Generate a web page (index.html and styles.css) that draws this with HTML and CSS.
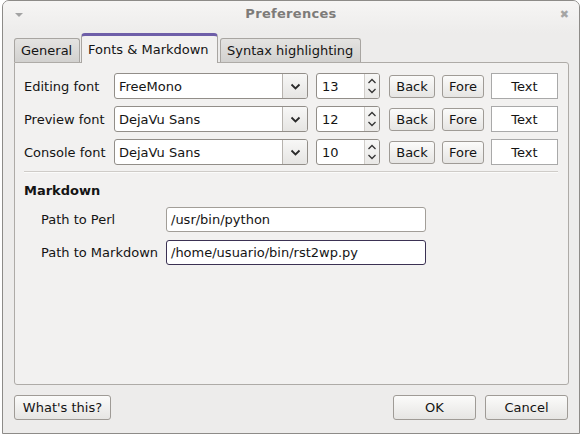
FILE: index.html
```html
<!DOCTYPE html>
<html>
<head>
<meta charset="utf-8">
<link rel="stylesheet" href="styles.css">
</head>
<body>
<div class="window">
  <div class="titlebar">
    <span class="menu-tri"></span>
    <span class="title">Preferences</span>
    <span class="close">&#x2716;</span>
  </div>
  <div class="tabs">
    <div class="tab">General</div>
    <div class="tab active">Fonts &amp; Markdown</div>
    <div class="tab">Syntax highlighting</div>
  </div>
  <div class="panel">
    <div class="fontrow">
      <span class="label">Editing font</span>
      <div class="combo"><span class="combo-text">FreeMono</span><span class="combo-btn"><svg width="11" height="7" viewBox="0 0 11 7"><polyline points="1.5,1.5 5.5,5.5 9.5,1.5" fill="none" stroke="#2a2a2a" stroke-width="1.8"/></svg></span></div>
      <div class="spin"><span class="spin-text">13</span><span class="spin-btns"><svg width="10" height="6" viewBox="0 0 10 6"><polyline points="1.5,5 5,1.5 8.5,5" fill="none" stroke="#333" stroke-width="1.3"/></svg><svg width="10" height="6" viewBox="0 0 10 6"><polyline points="1.5,1 5,4.5 8.5,1" fill="none" stroke="#333" stroke-width="1.3"/></svg></span></div>
      <div class="btn back">Back</div>
      <div class="btn fore">Fore</div>
      <div class="textbox">Text</div>
    </div>
    <div class="fontrow">
      <span class="label">Preview font</span>
      <div class="combo"><span class="combo-text">DejaVu Sans</span><span class="combo-btn"><svg width="11" height="7" viewBox="0 0 11 7"><polyline points="1.5,1.5 5.5,5.5 9.5,1.5" fill="none" stroke="#2a2a2a" stroke-width="1.8"/></svg></span></div>
      <div class="spin"><span class="spin-text">12</span><span class="spin-btns"><svg width="10" height="6" viewBox="0 0 10 6"><polyline points="1.5,5 5,1.5 8.5,5" fill="none" stroke="#333" stroke-width="1.3"/></svg><svg width="10" height="6" viewBox="0 0 10 6"><polyline points="1.5,1 5,4.5 8.5,1" fill="none" stroke="#333" stroke-width="1.3"/></svg></span></div>
      <div class="btn back">Back</div>
      <div class="btn fore">Fore</div>
      <div class="textbox">Text</div>
    </div>
    <div class="fontrow">
      <span class="label">Console font</span>
      <div class="combo"><span class="combo-text">DejaVu Sans</span><span class="combo-btn"><svg width="11" height="7" viewBox="0 0 11 7"><polyline points="1.5,1.5 5.5,5.5 9.5,1.5" fill="none" stroke="#2a2a2a" stroke-width="1.8"/></svg></span></div>
      <div class="spin"><span class="spin-text">10</span><span class="spin-btns"><svg width="10" height="6" viewBox="0 0 10 6"><polyline points="1.5,5 5,1.5 8.5,5" fill="none" stroke="#333" stroke-width="1.3"/></svg><svg width="10" height="6" viewBox="0 0 10 6"><polyline points="1.5,1 5,4.5 8.5,1" fill="none" stroke="#333" stroke-width="1.3"/></svg></span></div>
      <div class="btn back">Back</div>
      <div class="btn fore">Fore</div>
      <div class="textbox">Text</div>
    </div>
    <div class="separator"></div>
    <div class="heading">Markdown</div>
    <div class="pathrow">
      <span class="plabel">Path to Perl</span>
      <div class="input">/usr/bin/python</div>
    </div>
    <div class="pathrow">
      <span class="plabel">Path to Markdown</span>
      <div class="input focused">/home/usuario/bin/rst2wp.py</div>
    </div>
  </div>
  <div class="footer">
    <div class="btn whats">What's this?</div>
    <div class="spacer"></div>
    <div class="btn dlg">OK</div>
    <div class="btn dlg">Cancel</div>
  </div>
</div>
</body>
</html>
```
FILE: styles.css
```css
html, body {
  margin: 0;
  padding: 0;
  background: #ffffff;
  font-family: "DejaVu Sans", sans-serif;
  font-size: 13px;
  color: #141414;
}
.window {
  margin-left: 2px;
  width: 578px;
  height: 434px;
  box-sizing: border-box;
  border: 1px solid #8d8b88;
  border-radius: 7px 7px 0 0;
  background: #edeceb;
  display: flex;
  flex-direction: column;
}
.titlebar {
  height: 32px;
  flex: none;
  display: flex;
  align-items: center;
  position: relative;
  background: linear-gradient(#f6f5f4, #edeceb);
  border-radius: 6px 6px 0 0;
  padding-bottom: 8px;
  box-sizing: border-box;
}
.menu-tri {
  position: absolute;
  left: 12px;
  top: 12px;
  width: 0;
  height: 0;
  border-left: 4px solid transparent;
  border-right: 4px solid transparent;
  border-top: 4px solid #a3a3a3;
}
.title {
  flex: 1;
  text-align: center;
  font-weight: bold;
  color: #7d7b79;
  letter-spacing: 0.3px;
}
.close {
  position: absolute;
  right: 10px;
  top: 7px;
  font-size: 11px;
  color: #a5a5a5;
}
.tabs {
  height: 29px;
  flex: none;
  display: flex;
  align-items: flex-end;
  padding-left: 11px;
  gap: 1px;
  position: relative;
  z-index: 2;
}
.tab {
  height: 24px;
  box-sizing: border-box;
  border: 1px solid #a8a5a1;
  border-bottom: none;
  border-radius: 3px 3px 0 0;
  background: linear-gradient(#e4e3e1, #d2d1cf);
  padding: 0 0 0 6px;
  display: flex;
  align-items: center;
  white-space: nowrap;
}
.tab:first-child { width: 66px; }
.tab:last-child { width: 141px; margin-left: 1px; padding-left: 6px; }
.tab.active {
  height: 30px;
  width: 137px;
  background: #f2f1f0;
  border-top: 3px solid #6e5ea8;
  border-color: #a8a5a1;
  border-top-color: #6e5ea8;
  padding-top: 0;
  padding-bottom: 1px;
  padding-left: 6px;
  margin-bottom: -1px;
  border-radius: 4px 4px 0 0;
}
.panel {
  margin: 0 10px 0 11px;
  height: 323px;
  flex: none;
  box-sizing: border-box;
  border: 1px solid #aeaba7;
  border-radius: 0 3px 3px 3px;
  background: #f2f1f0;
  padding: 10px 10px 0 9px;
  display: flex;
  flex-direction: column;
}
.fontrow {
  height: 26px;
  display: flex;
  align-items: center;
  margin-bottom: 7px;
}
.label {
  width: 90px;
  flex: none;
}
.combo {
  width: 194px;
  height: 26px;
  box-sizing: border-box;
  border: 1px solid #928e89;
  border-radius: 3px;
  background: #ffffff;
  display: flex;
  overflow: hidden;
  flex: none;
}
.combo-text {
  flex: 1;
  padding-left: 4px;
  display: flex;
  align-items: center;
}
.combo-btn {
  width: 24px;
  border-left: 1px solid #b7b3ae;
  background: linear-gradient(#f7f7f6, #e6e5e3);
  display: flex;
  align-items: center;
  justify-content: center;
}
.spin {
  margin-left: 8px;
  width: 64px;
  height: 26px;
  box-sizing: border-box;
  border: 1px solid #928e89;
  border-radius: 3px;
  background: #ffffff;
  display: flex;
  overflow: hidden;
  flex: none;
}
.spin-text {
  flex: 1;
  padding-left: 5px;
  display: flex;
  align-items: center;
}
.spin-btns {
  width: 15px;
  background: linear-gradient(#f7f7f6, #e9e8e6);
  border-left: 1px solid #d0cdc9;
  display: flex;
  flex-direction: column;
  justify-content: space-around;
  align-items: center;
  padding: 2px 0;
  box-sizing: border-box;
}
.btn {
  height: 23px;
  box-sizing: border-box;
  border: 1px solid #9f9b96;
  border-radius: 3px;
  background: linear-gradient(#fbfbfa, #e6e5e3);
  display: flex;
  align-items: center;
  justify-content: center;
  flex: none;
}
.btn.back { margin-left: 9px; width: 46px; }
.btn.fore { margin-left: 7px; width: 42px; }
.textbox {
  margin-left: 7px;
  width: 67px;
  height: 26px;
  box-sizing: border-box;
  border: 1px solid #a9a9a9;
  background: #ffffff;
  display: flex;
  align-items: center;
  justify-content: center;
  flex: none;
}
.separator {
  margin-top: -1px;
  width: 534px;
  height: 1px;
  background: #cfccc8;
  border-bottom: 1px solid #fbfbfa;
}
.heading {
  font-weight: bold;
  margin-top: 9px;
  height: 18px;
  line-height: 18px;
}
.pathrow {
  display: flex;
  align-items: center;
  margin-top: 7px;
  padding-left: 17px;
  height: 25px;
}
.pathrow + .pathrow { margin-top: 8px; }
.plabel {
  width: 125px;
  flex: none;
}
.input {
  width: 260px;
  height: 25px;
  box-sizing: border-box;
  border: 1px solid #a29e98;
  border-radius: 3px;
  background: #ffffff;
  padding-left: 4px;
  display: flex;
  align-items: center;
}
.input.focused {
  border-color: #3b3153;
}
.footer {
  display: flex;
  align-items: center;
  margin: 10px 11px 0 11px;
  gap: 9px;
}
.footer .btn { height: 25px; }
.btn.whats { width: 97px; }
.spacer { flex: 1; }
.btn.dlg { width: 83px; }
```
